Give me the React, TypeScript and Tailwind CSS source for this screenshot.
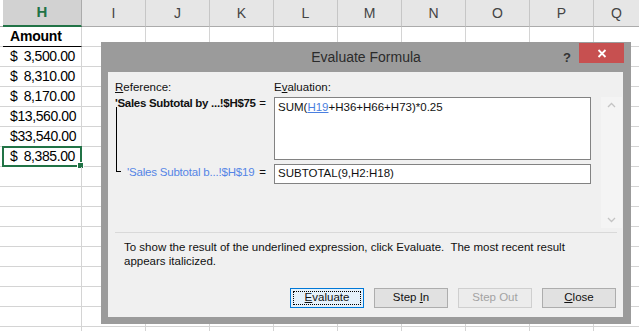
import React from 'react';

const cols = ['I', 'J', 'K', 'L', 'M', 'N', 'O', 'P'];

const values = ['3,500.00', '8,310.00', '8,170.00', '13,560.00', '33,540.00', '8,385.00'];

const sheetFont = { fontFamily: '"Liberation Sans", Arial, sans-serif' };
const uiFont = { fontFamily: '"Liberation Sans", Arial, sans-serif' };

function Row({ children, first, selected }: { children?: React.ReactNode; first?: boolean; selected?: boolean }) {
  return (
    <div className="flex h-[20px]">
      <div className="w-[3px] shrink-0 border-b border-[#d4d4d4]" />
      <div
        className={`relative w-[79px] shrink-0 border-r border-[#d4d4d4] ${first ? 'border-b border-b-black' : 'border-b'} border-b-[#d4d4d4]`}
      >
        {children}
        {selected && (
          <>
            <div className="absolute -left-[1px] -top-[1px] -right-[1px] -bottom-[1px] border-2 border-[#217346]" />
            <div className="absolute -right-[3px] -bottom-[3px] w-[5px] h-[5px] bg-[#217346] border border-white box-content" />
          </>
        )}
      </div>
      {cols.map(c => (
        <div key={c} className="w-[64px] shrink-0 border-r border-b border-[#d4d4d4]" />
      ))}
      <div className="flex-1 border-b border-[#d4d4d4]" />
    </div>
  );
}

function Btn({ label, u, rest, focus, disabled }: { label: string; u?: string; rest?: string; focus?: boolean; disabled?: boolean }) {
  const base = 'w-[74px] h-[20px] flex items-center justify-center border';
  if (disabled)
    return <div className={`${base} border-[#cfcfcf] bg-[#ececec] text-[#a3a3a3]`}>{label}</div>;
  return (
    <div className={`${base} ${focus ? 'border-[#0078d7] bg-[#e5f1fb]' : 'border-[#adadad] bg-[#e1e1e1]'} text-[#111] p-[2px]`}>
      <div className={`w-full h-full flex items-center justify-center ${focus ? 'border border-dotted border-black' : ''}`}>
        <span>
          {label}
          <span className="underline">{u}</span>
          {rest}
        </span>
      </div>
    </div>
  );
}

function Chevron({ up }: { up?: boolean }) {
  return (
    <svg width="9" height="6" viewBox="0 0 9 6">
      <path d={up ? 'M1 5 L4.5 1.5 L8 5' : 'M1 1 L4.5 4.5 L8 1'} fill="none" stroke="#c4c4c4" strokeWidth="1.3" />
    </svg>
  );
}

export default function App() {
  return (
    <div className="relative w-[639px] h-[331px] overflow-hidden bg-white" style={sheetFont}>
      {/* column headers */}
      <div className="flex h-[27px] bg-[#e6e6e6] text-[14px] text-[#444]">
        <div className="w-[3px] shrink-0 bg-white border-b border-[#ababab]" />
        <div className="w-[79px] shrink-0 flex items-center justify-center bg-[#d2d2d2] border-r border-[#ababab] border-b-2 border-b-[#217346] text-[#217346] font-bold text-[15px]">
          H
        </div>
        {cols.map(c => (
          <div key={c} className="w-[64px] shrink-0 flex items-center justify-center border-r border-b border-[#c6c6c6] border-b-[#ababab]">
            {c}
          </div>
        ))}
        <div className="flex-1 flex items-center justify-center border-b border-[#ababab]">Q</div>
      </div>

      {/* rows */}
      <div className="text-[14px] tracking-[-0.4px] text-black">
        <Row first>
          <div className="h-full flex items-center pl-[7px] font-bold tracking-[-0.2px] text-[14px]">Amount</div>
        </Row>
        {values.map((v, i) => (
          <Row key={v} selected={i === values.length - 1}>
            <div className="h-full flex items-center justify-between pl-[7px] pr-[6px]">
              <span>$</span>
              <span>{v}</span>
            </div>
          </Row>
        ))}
        {Array.from({ length: 9 }).map((_, i) => (
          <Row key={'e' + i} />
        ))}
      </div>

      {/* dialog */}
      <div className="absolute left-[101px] top-[42px] w-[530px] h-[282px] bg-[#9b9b9b] flex flex-col" style={uiFont}>
        <div className="h-[30px] shrink-0 flex items-center relative">
          <div className="flex-1 text-center text-[14px] text-[#2b2b2b]">Evaluate Formula</div>
          <div className="absolute left-[462px] top-[6px] text-[13px] font-bold text-[#333]">?</div>
          <div className="absolute left-[478px] top-[1px] w-[45px] h-[20px] bg-[#c75050] flex items-center justify-center">
            <svg width="10" height="9" viewBox="0 0 10 9">
              <path d="M1.5 1 L8.5 8 M8.5 1 L1.5 8" stroke="#fff" strokeWidth="1.8" />
            </svg>
          </div>
        </div>
        <div className="ml-[7px] mr-[8px] h-[245px] bg-[#f0f0f0] text-[11.5px] text-[#111] whitespace-nowrap">
          <div className="flex pl-[7px] pt-[7px]">
            <div className="w-[159px] shrink-0">
              <div className="h-[16px] leading-[16px]">
                <span className="underline">R</span>eference:
              </div>
              <div className="h-[16px] leading-[16px] flex justify-between font-bold">
                <span className="tracking-[-0.3px]">'Sales Subtotal by ...!$H$75</span>
                <span className="font-normal pr-[8px]">=</span>
              </div>
              <div className="ml-[1px] -mt-[4px] w-[5px] h-[57px] border-l border-black" />
              <div className="flex h-[16px] leading-[16px]">
                <div className="ml-[1px] w-[5px] h-[8px] border-l border-b border-black shrink-0" />
                <div className="flex-1 flex justify-between ml-[6px]">
                  <span className="text-[#5585e6] tracking-[-0.2px]">'Sales Subtotal b...!$H$19</span>
                  <span className="pr-[8px]">=</span>
                </div>
              </div>
            </div>
            <div className="w-[317px] shrink-0">
              <div className="h-[18px] leading-[16px]">
                E<span className="underline">v</span>aluation:
              </div>
              <div className="h-[63px] border border-[#828282] bg-white px-[3px] pt-[1px] leading-[16px]">
                SUM(<span className="text-[#4a7fe0] underline">H19</span>+H36+H66+H73)*0.25
              </div>
              <div className="mt-[4px] h-[20px] border border-[#828282] bg-white px-[3px] flex items-center">
                SUBTOTAL(9,H2:H18)
              </div>
            </div>
            <div className="ml-[10px] mt-[18px] w-[21px] h-[131px] bg-[#f4f4f4] flex flex-col items-center justify-between py-[5px]">
              <Chevron up />
              <Chevron />
            </div>
          </div>
          <div className="ml-[7px] mt-[4px] w-[502px] h-px bg-[#d9d9d9]" />
          <div className="pl-[16px] pt-[7px] leading-[14px]">
            <div>To show the result of the underlined expression, click Evaluate.&nbsp; The most recent result</div>
            <div>appears italicized.</div>
          </div>
          <div className="flex justify-end gap-[10px] pr-[7px] mt-[20px]">
            <Btn label="" u="E" rest="valuate" focus />
            <Btn label="Step " u="I" rest="n" />
            <Btn label="Step Out" disabled />
            <Btn label="" u="C" rest="lose" />
          </div>
        </div>
      </div>
    </div>
  );
}
